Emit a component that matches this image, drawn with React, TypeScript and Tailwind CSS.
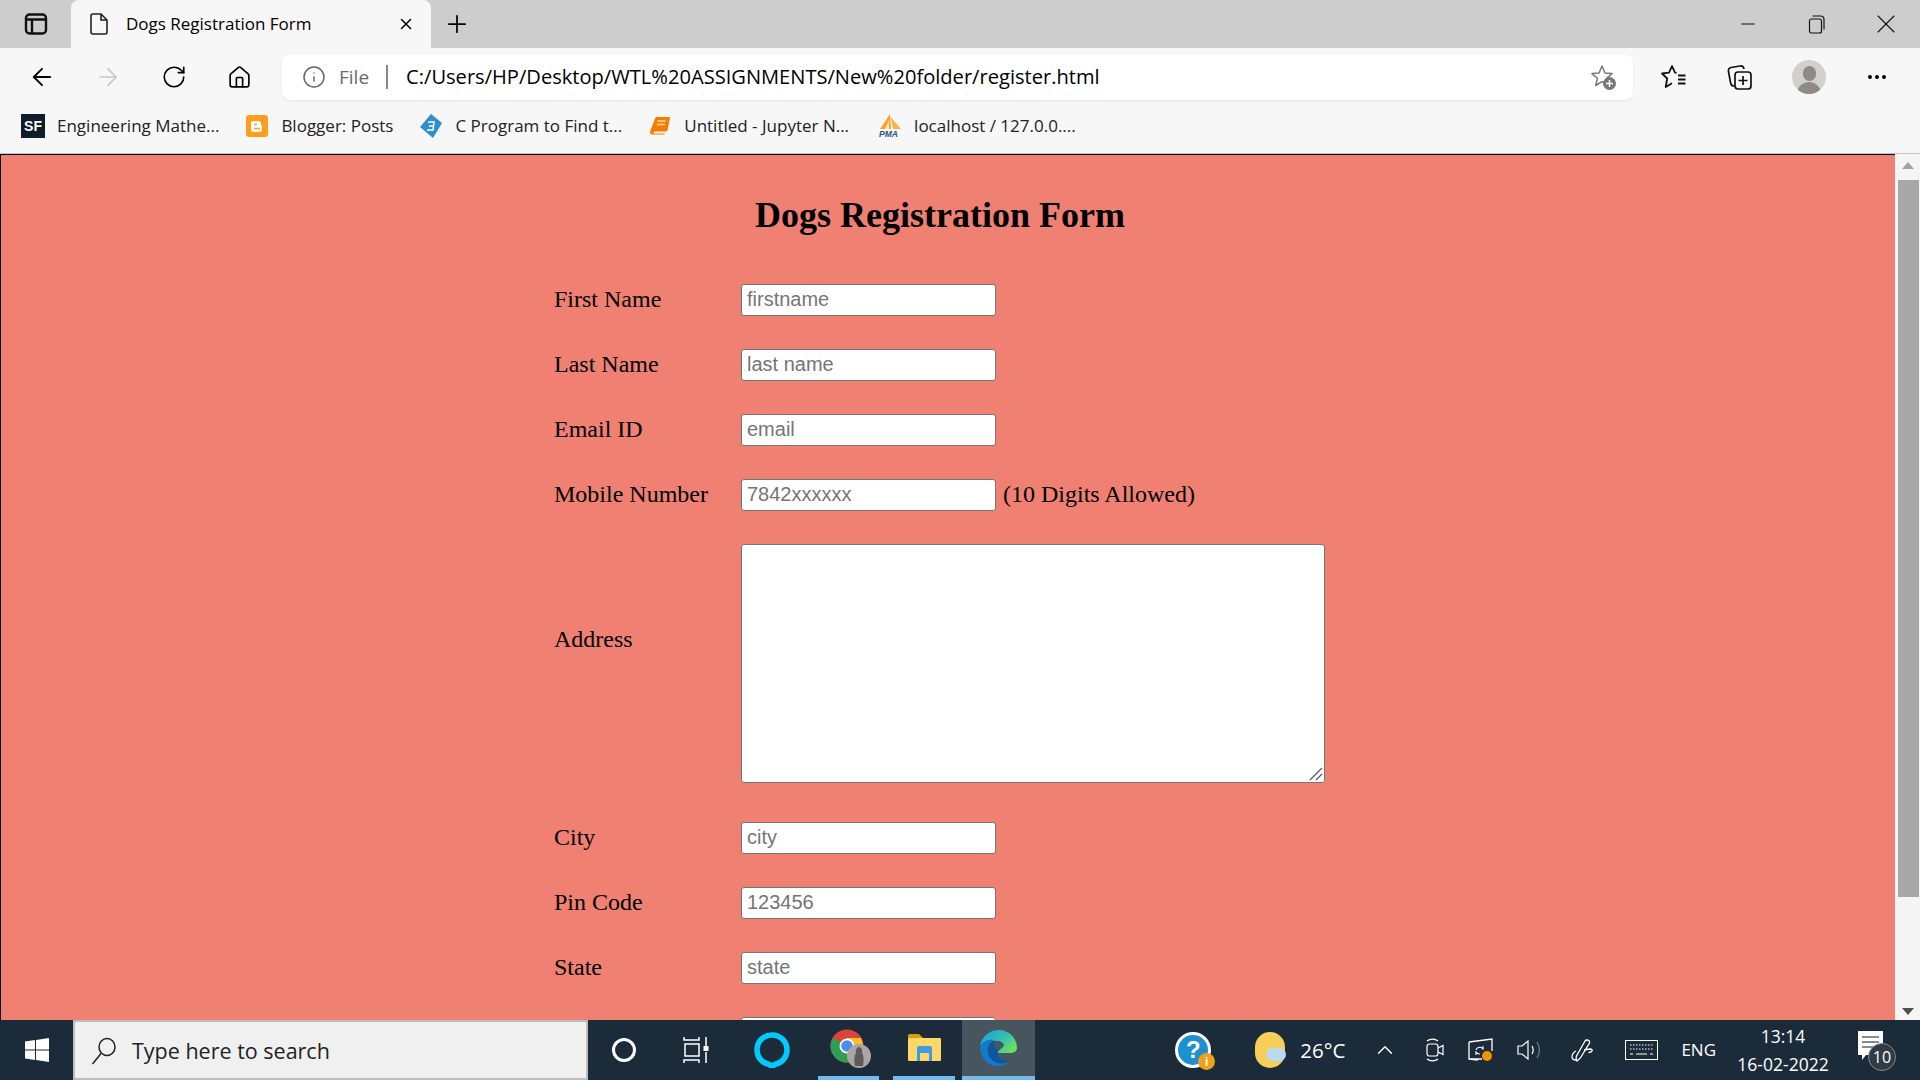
import React from 'react';
import { ArrowLeft, ArrowRight, RotateCw, Home, Info, X, Plus, Minus, MoreHorizontal, ChevronUp } from 'lucide-react';

const fields = [
  { label: 'First Name', placeholder: 'firstname' },
  { label: 'Last Name', placeholder: 'last name' },
  { label: 'Email ID', placeholder: 'email' },
  { label: 'Mobile Number', placeholder: '7842xxxxxx', note: '(10 Digits Allowed)' },
];

const moreFields = [
  { label: 'City', placeholder: 'city' },
  { label: 'Pin Code', placeholder: '123456' },
  { label: 'State', placeholder: 'state' },
  { label: '', placeholder: '' },
];

const inputClass =
  "w-[255px] h-8 shrink-0 rounded-[3px] border border-[#767676] bg-white px-[5px] pb-[2px] font-['Liberation_Sans',sans-serif] text-xl text-black placeholder:text-[#757575] outline-none";

const Row = ({ label, placeholder, note }: { label: string; placeholder: string; note?: string }) => (
  <div className="flex h-8 items-center">
    <label className="w-[187px] shrink-0 pb-[2px]">{label}</label>
    <input className={inputClass} placeholder={placeholder} readOnly />
    {note && <span className="ml-[7px] pb-[2px]">{note}</span>}
  </div>
);

const Bookmark = ({ icon, label, className = '' }: { icon: React.ReactNode; label: string; className?: string }) => (
  <div className={`flex items-center gap-3 ${className}`}>
    <span className="flex h-6 w-6 shrink-0 items-center justify-center">{icon}</span>
    <span className="whitespace-nowrap">{label}</span>
  </div>
);

export default function App() {
  return (
    <div className="flex h-screen w-full flex-col overflow-hidden bg-[#f7f7f7] font-['Open_Sans',sans-serif] text-black">
      {/* tab strip */}
      <div className="flex h-12 shrink-0 items-center bg-[#cdcdcd]">
        <div className="flex w-[71px] justify-center">
          <svg width="24" height="24" viewBox="0 0 24 24" fill="none" stroke="#111" strokeWidth="2.400">
            <rect x="2" y="2.500" width="20" height="19" rx="3.500" />
            <path d="M2 7.500h20M8 7.500V21" />
          </svg>
        </div>
        <div className="flex h-12 w-[360px] items-center rounded-t-lg bg-[#f7f7f7] pl-[18px] pr-[16px]">
          <svg width="20" height="24" viewBox="0 0 20 24" fill="none" stroke="#222" strokeWidth="1.600">
            <path d="M2 4a2 2 0 0 1 2-2h8l6 6v12a2 2 0 0 1-2 2H4a2 2 0 0 1-2-2zM12 2v6h6" />
          </svg>
          <span className="ml-[17px] flex-1 whitespace-nowrap text-[17px]">Dogs Registration Form</span>
          <X size={18} strokeWidth={2} />
        </div>
        <Plus size={28} strokeWidth={1.500} className="ml-[12px]" />
        <div className="flex-1" />
        <div className="flex items-center text-[#111]">
          <Minus size={22} strokeWidth={1.100} className="mr-[48px]" />
          <svg width="20" height="20" viewBox="0 0 20 20" fill="none" stroke="#111" strokeWidth="1.200" className="mr-[43px]">
            <rect x="2.500" y="5" width="12" height="14" rx="2" />
            <path d="M5.500 2h8a3.500 3.500 0 0 1 3.500 3.500v10" />
          </svg>
          <X size={32} strokeWidth={0.800} className="mr-[18px]" />
        </div>
      </div>

      {/* toolbar */}
      <div className="flex h-[58px] shrink-0 items-center">
        <div className="flex w-[282px] items-center">
          <ArrowLeft size={28} strokeWidth={1.600} className="ml-[28px]" />
          <ArrowRight size={28} strokeWidth={1.400} className="ml-[38px] text-[#c8c8c8]" />
          <RotateCw size={26} strokeWidth={1.500} className="ml-[39px]" />
          <Home size={25} strokeWidth={1.600} className="ml-[40px]" />
        </div>
        <div className="flex h-[45px] w-[1351px] items-center rounded-lg bg-white pl-[20px] pr-[16px] shadow-[0_1px_2px_rgba(0,0,0,0.08)]">
          <Info size={24} strokeWidth={1.500} className="text-[#666]" />
          <span className="ml-[13px] text-[19px] text-[#6b6b6b]">File</span>
          <span className="ml-[17px] h-6 w-0.5 bg-[#888]" />
          <span className="ml-[18px] flex-1 whitespace-nowrap text-[20.100px]">
            C:/Users/HP/Desktop/WTL%20ASSIGNMENTS/New%20folder/register.html
          </span>
          <svg width="28" height="28" viewBox="0 0 28 28" fill="none">
            <path d="M13 3l3 7 7 .6-5.400 4.700 1.700 7.200L13 18.700 6.700 22.500l1.700-7.200L3 10.600l7-.6z" stroke="#777" strokeWidth="1.500" strokeLinejoin="round" />
            <circle cx="20.500" cy="20.500" r="6.500" fill="#777" />
            <path d="M20.500 17v7M17 20.500h7" stroke="#fff" strokeWidth="1.500" />
          </svg>
        </div>
        <div className="flex flex-1 items-center">
          <svg width="28" height="28" viewBox="0 0 28 28" fill="none" stroke="#111" strokeWidth="1.800" className="ml-[27px]" strokeLinejoin="round">
            <path d="M16.500 9.800L15 9.600 12 3 9 9.600l-7 .9 5.200 5-1.500 8.500 6.300-3.800M18 12.500h7.500M18 16.500h7.500M18 20.500h7.500" />
          </svg>
          <svg width="28" height="28" viewBox="0 0 28 28" fill="none" stroke="#111" strokeWidth="1.700" className="ml-[37px]">
            <rect x="10" y="9" width="16" height="17" rx="3" />
            <path d="M18 13v9M13.500 17.500h9M9 23c-2 0-3-1-3.400-3L3.500 8.500C3 6 4 5 6 4.500L15 3c2-.3 3.500.5 4 3" />
          </svg>
          <div className="ml-[39px] flex h-[34px] w-[34px] flex-col items-center justify-end overflow-hidden rounded-full bg-[#d2d0cc]">
            <div className="mb-px h-[15px] w-[13px] rounded-full bg-[#8e8a86]" />
            <div className="h-[12px] w-[24px] rounded-t-full bg-[#8e8a86]" />
          </div>
          <MoreHorizontal size={24} strokeWidth={2} className="ml-[39px]" />
        </div>
      </div>

      {/* favourites bar */}
      <div className="flex h-[47px] shrink-0 items-center gap-[26px] pb-[8px] pl-[21px] text-[17px] text-[#222]">
        <Bookmark
          label="Engineering Mathe..."
          icon={
            <span className="flex h-6 w-6 items-center justify-center bg-[#0e1c2b] font-['Liberation_Sans',sans-serif] text-sm font-bold text-white">
              SF
            </span>
          }
        />
        <Bookmark
          label="Blogger: Posts"
          icon={
            <svg width="22" height="24" viewBox="0 0 22 24">
              <rect x="0" y="1" width="22" height="22" rx="3" fill="#ff9d1c" />
              <path d="M7 7h5a3 3 0 0 1 3 3v1l1 1v3a3 3 0 0 1-3 3H8a3 3 0 0 1-3-3V9a2 2 0 0 1 2-2z" fill="#fff" />
              <path d="M8 10.500h3M8 14.500h6" stroke="#ff9d1c" strokeWidth="1.500" />
            </svg>
          }
        />
        <Bookmark
          label="C Program to Find t..."
          icon={
            <svg width="24" height="26" viewBox="0 0 24 26">
              <path d="M12 1l11 9-9 15L1 14z" fill="#2d8fd0" />
              <path d="M9 9h6l-1 8H8M10 13h4" stroke="#fff" strokeWidth="1.500" fill="none" />
            </svg>
          }
        />
        <Bookmark
          label="Untitled - Jupyter N..."
          icon={
            <svg width="20" height="18" viewBox="0 0 20 18">
              <path d="M5 1.500A1.500 1.500 0 0 1 6.500 0H19a1 1 0 0 1 1 1.200L17.500 13a2 2 0 0 1-2 1.500H4a1.500 1.500 0 0 0 0 2h11l-.5 1H2.500A2.500 2.500 0 0 1 0 15z" fill="#f57c00" />
              <path d="M7.500 4h8M7 7.500h8" stroke="#ffd9a8" strokeWidth="1.300" />
            </svg>
          }
        />
        <Bookmark
          className="ml-[3px]"
          label="localhost / 127.0.0...."
          icon={
            <svg width="24" height="24" viewBox="0 0 24 24">
              <path d="M12 0l1 15H2z" fill="#f6a530" />
              <path d="M12.500 3L23 15h-8z" fill="#f8b24a" />
              <path d="M11 6L7 15h4z" fill="#fde2b4" />
              <text x="1" y="23" fontSize="8.500" fontWeight="700" fontStyle="italic" fill="#2f4f86" fontFamily="Liberation Sans">PMA</text>
            </svg>
          }
        />
      </div>

      {/* page area */}
      <div className="flex min-h-0 flex-1 border-t border-[#c4c4c4]">
        <div className="min-w-0 flex-1 overflow-hidden border-l border-t border-black bg-[#f08072] font-['Liberation_Serif',serif] text-2xl">
          <h2 className="mt-[40px] w-[1878px] text-center text-4xl font-bold leading-[41px]">Dogs Registration Form</h2>
          <form className="ml-[553px] mt-[48px] flex flex-col">
            <div className="flex flex-col gap-[33px]">
              {fields.map((f) => (
                <Row key={f.label} {...f} />
              ))}
            </div>
            <div className="mt-[33px] flex items-center">
              <label className="w-[187px] shrink-0 pb-[50px]">Address</label>
              <div className="relative flex">
                <textarea className="h-[239px] w-[584px] resize-none rounded-[3px] border border-[#767676] bg-white outline-none" readOnly />
                <svg width="14" height="14" viewBox="0 0 14 14" fill="none" stroke="#555" strokeWidth="1.200" className="absolute bottom-[2px] right-[2px]">
                  <path d="M1 13L13 1M7 13l6-6" />
                </svg>
              </div>
            </div>
            <div className="mt-[39px] flex flex-col gap-[33px]">
              {moreFields.map((f, i) => (
                <Row key={i} {...f} />
              ))}
            </div>
          </form>
        </div>
        <div className="flex w-[25px] shrink-0 flex-col items-center bg-[#f5f5f5] pl-px pt-2">
          <div className="h-0 w-0 border-x-[6px] border-b-[7px] border-x-transparent border-b-[#a3a3a3]" />
          <div className="mt-[11px] h-[717px] w-[21px] bg-[#a8a8a8]" />
          <div className="flex-1" />
          <div className="mb-[5px] h-0 w-0 border-x-[6px] border-t-[7px] border-x-transparent border-t-[#505050]" />
        </div>
      </div>

      {/* taskbar */}
      <div className="flex h-[60px] shrink-0 items-center bg-[#1c2b39] text-white">
        <div className="flex w-[73px] justify-center">
          <svg width="24" height="24" viewBox="0 0 24 24" fill="#fff">
            <path d="M0 3.500l10-1.400v9.300H0zM11 2l13-2v11.400H11zM0 12.500h10v9.400L0 20.500zM11 12.500h13V24l-13-1.900z" />
          </svg>
        </div>
        <div className="flex h-[60px] w-[515px] items-center border-2 border-[#bcbcbc] bg-[#f0f0f0] pl-[16px] pt-[2px] text-[#222]">
          <svg width="26" height="28" viewBox="0 0 26 28" fill="none" stroke="#222" strokeWidth="1.500">
            <ellipse cx="16" cy="10" rx="8" ry="8.500" />
            <path d="M10 16.500L1.500 27" />
          </svg>
          <span className="ml-[15px] text-[21.500px]">Type here to search</span>
        </div>
        <div className="flex h-[60px] items-center">
          <div className="ml-[24px] h-6 w-6 rounded-full border-[3px] border-white" />
          <svg width="26" height="28" viewBox="0 0 26 28" fill="none" stroke="#fff" strokeWidth="1.500" className="ml-[47px]">
            <path d="M1 1v3h15V1M1 27v-3h15v3M2 8h14v12H2zM23 1v9M23 16v11" />
            <rect x="20.500" y="10" width="5" height="5" fill="#fff" stroke="none" />
          </svg>
          <svg width="36" height="36" viewBox="0 0 36 36" fill="none" className="ml-[45px]">
            <path d="M18 3C9.500 3 3 9.500 3 18c0 7.500 5.500 13.500 12.500 14.500L18 35l2.500-2.500C27.500 31.500 33 25.500 33 18c0-8.500-6.500-15-15-15z" stroke="#00caff" strokeWidth="5.500" />
          </svg>
          <div className="ml-[28px] flex h-[60px] w-[61px] items-center justify-center border-b-[4px] border-[#76b9ed]">
            <svg width="42" height="40" viewBox="0 0 42 40" className="translate-x-[2px]">
              <circle cx="17" cy="18" r="16.500" fill="#d9453a" />
              <path d="M17 18L2.700 9.800A16.500 16.500 0 0 0 17 34.500l8-14z" fill="#2f9e52" />
              <path d="M17 18h16a16.500 16.500 0 0 0-2-8H17z" fill="#f6c02c" />
              <circle cx="17" cy="18" r="7.500" fill="#fff" />
              <circle cx="17" cy="18" r="5.800" fill="#4c8bf0" />
              <circle cx="29" cy="28" r="12" fill="#a9a6a3" />
              <path d="M25 38c-1-6-1-10 1-13-1-3 1-6 3-6s4 3 3 6c2 3 2 7 1 13z" fill="#5e5a58" />
            </svg>
          </div>
          <div className="ml-[14px] flex h-[60px] w-[62px] items-center justify-center border-b-[4px] border-[#76b9ed]">
            <svg width="33" height="28" viewBox="0 0 33 28">
              <path d="M0 2a2 2 0 0 1 2-2h9l4 4H0z" fill="#d9a00b" />
              <rect x="0" y="4" width="33" height="23" rx="1" fill="#fdd768" />
              <path d="M9 27V14a2 2 0 0 1 2-2h11a2 2 0 0 1 2 2v13h-3v-8h-9v8z" fill="#3d9be0" />
            </svg>
          </div>
          <div className="ml-[7px] flex h-[60px] w-[73px] items-center justify-center border-b-[4px] border-[#76b9ed] bg-[#47555f]">
            <svg width="37" height="36" viewBox="0 0 37 36">
              <defs>
                <linearGradient id="edgeTop" x1="0" y1="0" x2="1" y2="0.700">
                  <stop offset="0" stopColor="#1b9ede" />
                  <stop offset="0.600" stopColor="#35c1b0" />
                  <stop offset="1" stopColor="#6fe05a" />
                </linearGradient>
              </defs>
              <path d="M0 16C2 6 10 0 18.500 0 29 0 37 8 37 18c0 3-3 5-7 5H18c0-4 5-4 6-8-1-3-5-5-9-4-7 0-13 2-15 5z" fill="url(#edgeTop)" />
              <path d="M0 17c2-6 9-9 15-7-6 2-9 7-7 14 2 6 9 11 17 9 2 0 4-1 5-2-3 3-7 5-12 5C8 36 0 28 0 17z" fill="#0f7bd0" />
              <path d="M15 11c-6 2-8 8-6 14 2 6 9 9 15 8 3-1 5-2 6-3-4 1-9 0-11-3-2-2-2-5-1-7-3 0-5-4-3-9z" fill="#0b56a4" />
            </svg>
          </div>
        </div>
        <div className="flex-1" />
        <div className="flex items-center">
          <div className="relative mr-[44px] flex h-9 w-9 items-center justify-center rounded-full border-[3px] border-white bg-[#1e8fd0] font-['Liberation_Sans',sans-serif] text-2xl font-bold">
            ?
            <span className="absolute -bottom-[5px] -right-[7px] flex h-[17px] w-[17px] items-center justify-center rounded-full bg-[#f0a11c] text-xs">i</span>
          </div>
          <div className="relative h-9 w-[30px] rounded-full bg-[#f5cf58]">
            <div className="absolute bottom-[7px] right-[-1px] h-[13px] w-[20px] rounded-full bg-[#bcd9ef]" />
          </div>
          <span className="ml-[15px] text-[20.500px]">26°C</span>
          <ChevronUp size={26} strokeWidth={1.300} className="ml-[27px]" />
          <svg width="18" height="24" viewBox="0 0 18 24" fill="none" stroke="#fff" strokeWidth="1.200" className="ml-[28px]">
            <rect x="1" y="6" width="11" height="12" rx="2.500" />
            <path d="M12 10l5-2.500v9L12 14M1 3c3-2.500 8-2.500 11 0M1 21c3 2.500 8 2.500 11 0" />
          </svg>
          <svg width="26" height="24" viewBox="0 0 26 24" fill="none" stroke="#fff" strokeWidth="1.300" className="ml-[24px]">
            <path d="M1 4l23-3v12M1 4v17h13M1 21l9 1" />
            <path d="M8 12a4 4 0 0 1 6-2l1 1v-3M12 16a4 4 0 0 1-3-1l-1-1v3" strokeWidth="1.100" />
            <circle cx="19" cy="18" r="5" fill="#f79100" stroke="none" />
          </svg>
          <svg width="24" height="22" viewBox="0 0 24 22" fill="none" stroke="#fff" strokeWidth="1.200" className="ml-[23px]">
            <path d="M1 7h4l6-5v18l-6-5H1z" />
            <path d="M15 7c1.500 2.500 1.500 5.500 0 8" />
            <path d="M20 3c3 5 3 11 0 16" stroke="#77828b" />
          </svg>
          <svg width="22" height="24" viewBox="0 0 22 24" fill="none" stroke="#fff" strokeWidth="1.300" className="ml-[30px]">
            <path d="M16 2c1.500 0 3 1 2.500 3L10 19c-1 2-3 3-4 4-1-1-1-3-.5-5L14 3c.5-.7 1-1 2-1zM5 13c-2 1-4 3-4 6 0 2 2 3 4 3M13 12l6-1c2 0 2.500 1 2 2-.5 1-2 1.500-3.500 1.500" />
          </svg>
          <svg width="33" height="20" viewBox="0 0 33 20" fill="none" stroke="#fff" strokeWidth="1" className="ml-[32px]">
            <rect x="0.500" y="0.500" width="32" height="19" />
            <path d="M5 5h23M5 9h23" strokeDasharray="1.500 1.500" />
            <path d="M5 14h3M11 14h11M25 14h3" />
          </svg>
          <span className="ml-[23px] text-[17px]">ENG</span>
        </div>
        <div className="ml-[17px] flex w-[100px] flex-col items-center text-[17.500px] leading-[28px]">
          <span>13:14</span>
          <span>16-02-2022</span>
        </div>
        <div className="relative ml-[25px] mr-[24px] h-[42px] w-[38px]">
          <svg width="25" height="30" viewBox="0 0 25 30" className="absolute left-0 top-[2px]">
            <path d="M0 0h25v24H8l-4 5v-5H0z" fill="#fff" />
            <path d="M4 6h17M4 11h17M4 16h12" stroke="#666" strokeWidth="1.500" />
          </svg>
          <div className="absolute bottom-0 right-0 flex h-[28px] w-[28px] items-center justify-center rounded-full border border-[#888] bg-[#2f3b45] text-base">
            10
          </div>
        </div>
      </div>
    </div>
  );
}
